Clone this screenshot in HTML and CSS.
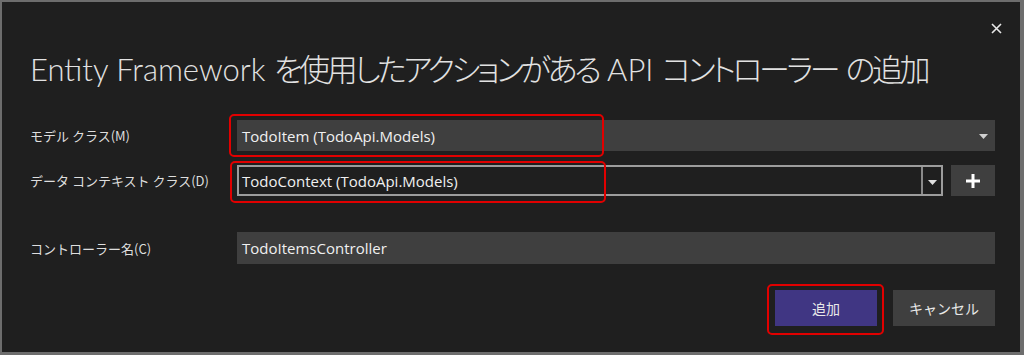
FILE: index.html
```html
<!DOCTYPE html>
<html lang="ja">
<head>
<meta charset="utf-8">
<title>API コントローラーの追加</title>
<link rel="stylesheet" href="styles.css">
</head>
<body>
<div class="dialog">
  <div class="topbar">
    <button class="close" aria-label="閉じる">
      <svg width="11" height="11" viewBox="0 0 11 11"><path d="M1 1 L10 10 M10 1 L1 10" stroke="#e8e8e8" stroke-width="1.6" fill="none"/></svg>
    </button>
  </div>
  <h1 class="title">Entity Framework <span class="ja">を使用したアクションがある</span> API <span class="ja">コントローラー</span> <span class="ja">の追加</span></h1>

  <div class="row row-model">
    <div class="label">モデル クラス(M)</div>
    <div class="field">
      <div class="combo combo-filled">
        <span class="value">TodoItem (TodoApi.Models)</span>
        <svg class="arrow" width="9" height="5" viewBox="0 0 9 5"><path d="M0 0 H9 L4.5 5 Z" fill="#d0d0d0"/></svg>
      </div>
      <span class="highlight hl-model"></span>
    </div>
  </div>

  <div class="row row-context">
    <div class="label">データ コンテキスト クラス(D)</div>
    <div class="field field-context">
      <div class="combo combo-bordered">
        <span class="value">TodoContext (TodoApi.Models)</span>
        <span class="drop"><svg width="9" height="5" viewBox="0 0 9 5"><path d="M0 0 H9 L4.5 5 Z" fill="#e0e0e0"/></svg></span>
      </div>
      <button class="plus" aria-label="追加">
        <svg width="16" height="16" viewBox="0 0 16 16"><path d="M8 1 V15 M1 8 H15" stroke="#ffffff" stroke-width="3" fill="none"/></svg>
      </button>
      <span class="highlight hl-context"></span>
    </div>
  </div>

  <div class="row row-name">
    <div class="label">コントローラー名(C)</div>
    <div class="field">
      <div class="textbox"><span class="value">TodoItemsController</span></div>
    </div>
  </div>

  <div class="actions">
    <div class="btn-wrap">
      <button class="btn btn-primary">追加</button>
      <span class="highlight hl-add"></span>
    </div>
    <button class="btn btn-secondary">キャンセル</button>
  </div>
</div>
</body>
</html>
```

FILE: styles.css
```css
* { box-sizing: border-box; }

html, body {
  margin: 0;
  padding: 0;
  background: #1f1f1f;
}

.dialog {
  width: 1024px;
  height: 355px;
  background: #1f1f1f;
  border: 2px solid #6d6d6d;
  border-right-width: 4px;
  border-bottom-width: 3px;
  padding: 0 25px 0 28px;
  display: flex;
  flex-direction: column;
  font-family: "Open Sans", "Noto Sans CJK JP", sans-serif;
  color: #e8e8e8;
}

.topbar {
  height: 47px;
  display: flex;
  justify-content: flex-end;
  align-items: flex-start;
}

.close {
  margin-top: 21px;
  margin-right: -7px;
  padding: 0;
  width: 11px;
  height: 11px;
  border: 0;
  background: transparent;
  display: flex;
}

.title {
  margin: 0;
  font-family: "Lato", "Noto Sans CJK JP Light", "Noto Sans CJK JP DemiLight", "Noto Sans CJK JP", sans-serif;
  font-weight: 300;
  font-size: 31px;
  line-height: 40px;
  color: #e2e2e2;
  white-space: nowrap;
}

.title .ja {
  letter-spacing: -3.4px;
  font-feature-settings: "palt";
}

.row {
  display: flex;
  align-items: center;
}

.row-model { margin-top: 31px; }
.row-context { margin-top: 14px; }
.row-name { margin-top: 36px; }

.label {
  width: 207px;
  flex: none;
  font-family: "Noto Sans CJK JP", sans-serif;
  font-size: 13px;
  color: #dedede;
  white-space: nowrap;
}

.field {
  flex: 1;
  position: relative;
  display: flex;
  gap: 8px;
}

.value {
  font-family: "Open Sans", "Noto Sans CJK JP", sans-serif;
  font-size: 15px;
  color: #f0f0f0;
  white-space: nowrap;
}

.combo {
  flex: 1;
  height: 31px;
  display: flex;
  align-items: center;
}

.combo-filled {
  background: #3f3f3f;
  padding: 0 7px 0 5px;
  justify-content: space-between;
}

.combo-filled .arrow { margin-top: 2px; }

.combo-bordered {
  border: 2px solid #9c9c9c;
  padding-left: 3px;
  background: #1f1f1f;
}

.combo-bordered .value { flex: 1; }

.drop {
  width: 20px;
  align-self: stretch;
  border-left: 2px solid #8a8a8a;
  display: flex;
  align-items: center;
  justify-content: center;
  padding-top: 3px;
}

.plus {
  width: 44px;
  height: 31px;
  flex: none;
  border: 0;
  padding: 0;
  background: #3f3f3f;
  display: flex;
  align-items: center;
  justify-content: center;
}

.textbox {
  flex: 1;
  height: 32px;
  background: #3f3f3f;
  padding-left: 5px;
  display: flex;
  align-items: center;
}

.actions {
  margin-top: 26px;
  display: flex;
  justify-content: flex-end;
  gap: 16px;
}

.btn-wrap { position: relative; display: flex; }

.btn {
  width: 102px;
  height: 36px;
  border: 0;
  padding: 0;
  font-family: "Noto Sans CJK JP", sans-serif;
  font-size: 14px;
  color: #e8e8e8;
}

.btn-primary { background: #403683; }
.btn-secondary { background: #3f3f3f; }

.highlight {
  position: absolute;
  border: 2px solid #e10000;
  border-radius: 5px;
  pointer-events: none;
}

.hl-model { left: -8px; top: -6px; width: 375px; height: 43px; }
.hl-context { left: -7px; top: -4px; width: 376px; height: 42px; }
.hl-add { left: -8px; top: -6px; width: 117px; height: 51px; }
```
